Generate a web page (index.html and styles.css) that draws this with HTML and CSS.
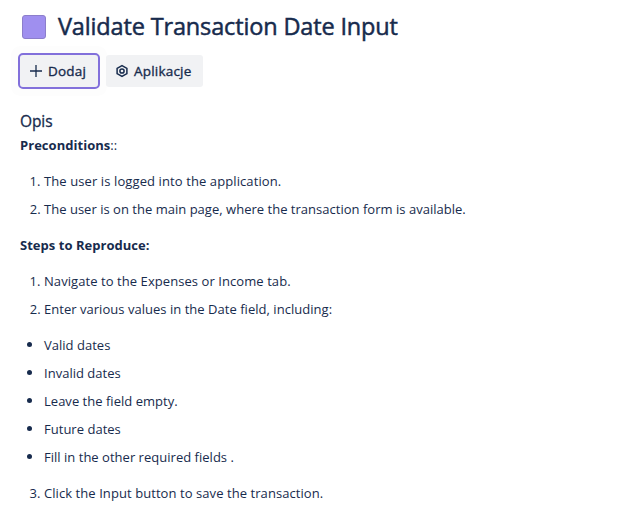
FILE: index.html
```html
<!DOCTYPE html>
<html lang="pl">
<head>
<meta charset="utf-8">
<title>Validate Transaction Date Input</title>
<link rel="stylesheet" href="styles.css">
</head>
<body>
<main class="issue">
  <header class="heading"><span class="swatch"></span><h1>Validate Transaction Date Input</h1></header>
  <div class="toolbar">
    <button class="btn focused"><svg width="16" height="16" viewBox="0 0 16 16"><path d="M8 2v12M2 8h12" stroke="currentColor" stroke-width="1.3" fill="none"/></svg>Dodaj</button>
    <button class="btn apps"><svg width="16" height="16" viewBox="0 0 16 16" fill="none" stroke="currentColor" stroke-width="1.5" stroke-linejoin="round"><path d="M8 2.600l4.900 2.700v5.400L8 13.400l-4.900-2.700v-5.400z"/><circle cx="8" cy="8" r="2.100"/></svg>Aplikacje</button>
  </div>
  <h2>Opis</h2>
  <section class="description">
    <p><strong>Preconditions</strong>::</p>
    <ol class="intro"><li class="login">The user is logged into the application.</li><li>The user is on the main page, where the transaction form is available.</li></ol>
    <p><strong>Steps to Reproduce:</strong></p>
    <ol class="steps"><li>Navigate to the Expenses or Income tab.</li><li class="values">Enter various values in the Date field, including:</li></ol>
    <ul><li>Valid dates</li><li>Invalid dates</li><li>Leave the field empty.</li><li>Future dates</li><li>Fill in the other required fields .</li></ul>
    <ol class="steps" start="3"><li>Click the Input button to save the transaction.</li></ol>
  </section>
</main>
</body>
</html>
```
FILE: styles.css
```css
* { box-sizing: border-box; }
body { margin: 0; background: #fff; color: #172b4d; font: 14px/24px "Open Sans", "Noto Sans", sans-serif; }
.issue { padding: 12px 20px 0; }
.heading { display: flex; align-items: center; height: 30px; gap: 12px; }
.swatch { width: 24px; height: 24px; margin-left: 2px; border: 1px solid #8c7ecb; border-radius: 3px; background: #9f8fef; }
h1 { margin: 0; padding-bottom: 1px; font-size: 23.5px; line-height: 29px; font-weight: 400; letter-spacing: -0.15px; -webkit-text-stroke: 0.5px currentColor; white-space: nowrap; }
.toolbar { display: flex; gap: 8px; margin-top: 13px; }
.btn { display: flex; align-items: center; gap: 4px; height: 32px; border: 0; border-radius: 3px; padding: 0 12px 1px 8px; background: #f1f2f4; color: #172b4d; font: 400 13.5px "Open Sans", sans-serif; letter-spacing: 0.2px; -webkit-text-stroke: 0.35px currentColor; white-space: nowrap; }
.btn svg { flex: none; }
.focused { outline: 2px solid #8270db; width: 78px; box-shadow: 0 0 0 9px #fdfdfd; }
.apps { position: relative; width: 97px; }
h2 { margin: 22px 0 0; font-size: 15.5px; line-height: 24px; font-weight: 400; letter-spacing: -0.1px; -webkit-text-stroke: 0.3px currentColor; }
p, ol, ul { margin: 0; }
.description { font-size: 13px; }
strong { letter-spacing: 0.03px; }
ol, ul { padding: 12px 0 12px 24px; }
ol.intro { letter-spacing: 0.02px; }
ol.intro .login { letter-spacing: 0.1px; }
ol.steps { letter-spacing: 0.07px; }
ol.steps .values { letter-spacing: 0.03px; }
ul { list-style: none; }
li + li { margin-top: 4px; }
ul li { display: flex; align-items: center; letter-spacing: 0.02px; }
ul li::before { content: ""; width: 5px; height: 5px; margin: 0 12px 1px -17px; border-radius: 50%; background: currentColor; }
ol + ul, ul + ol { padding-top: 0; }
```
